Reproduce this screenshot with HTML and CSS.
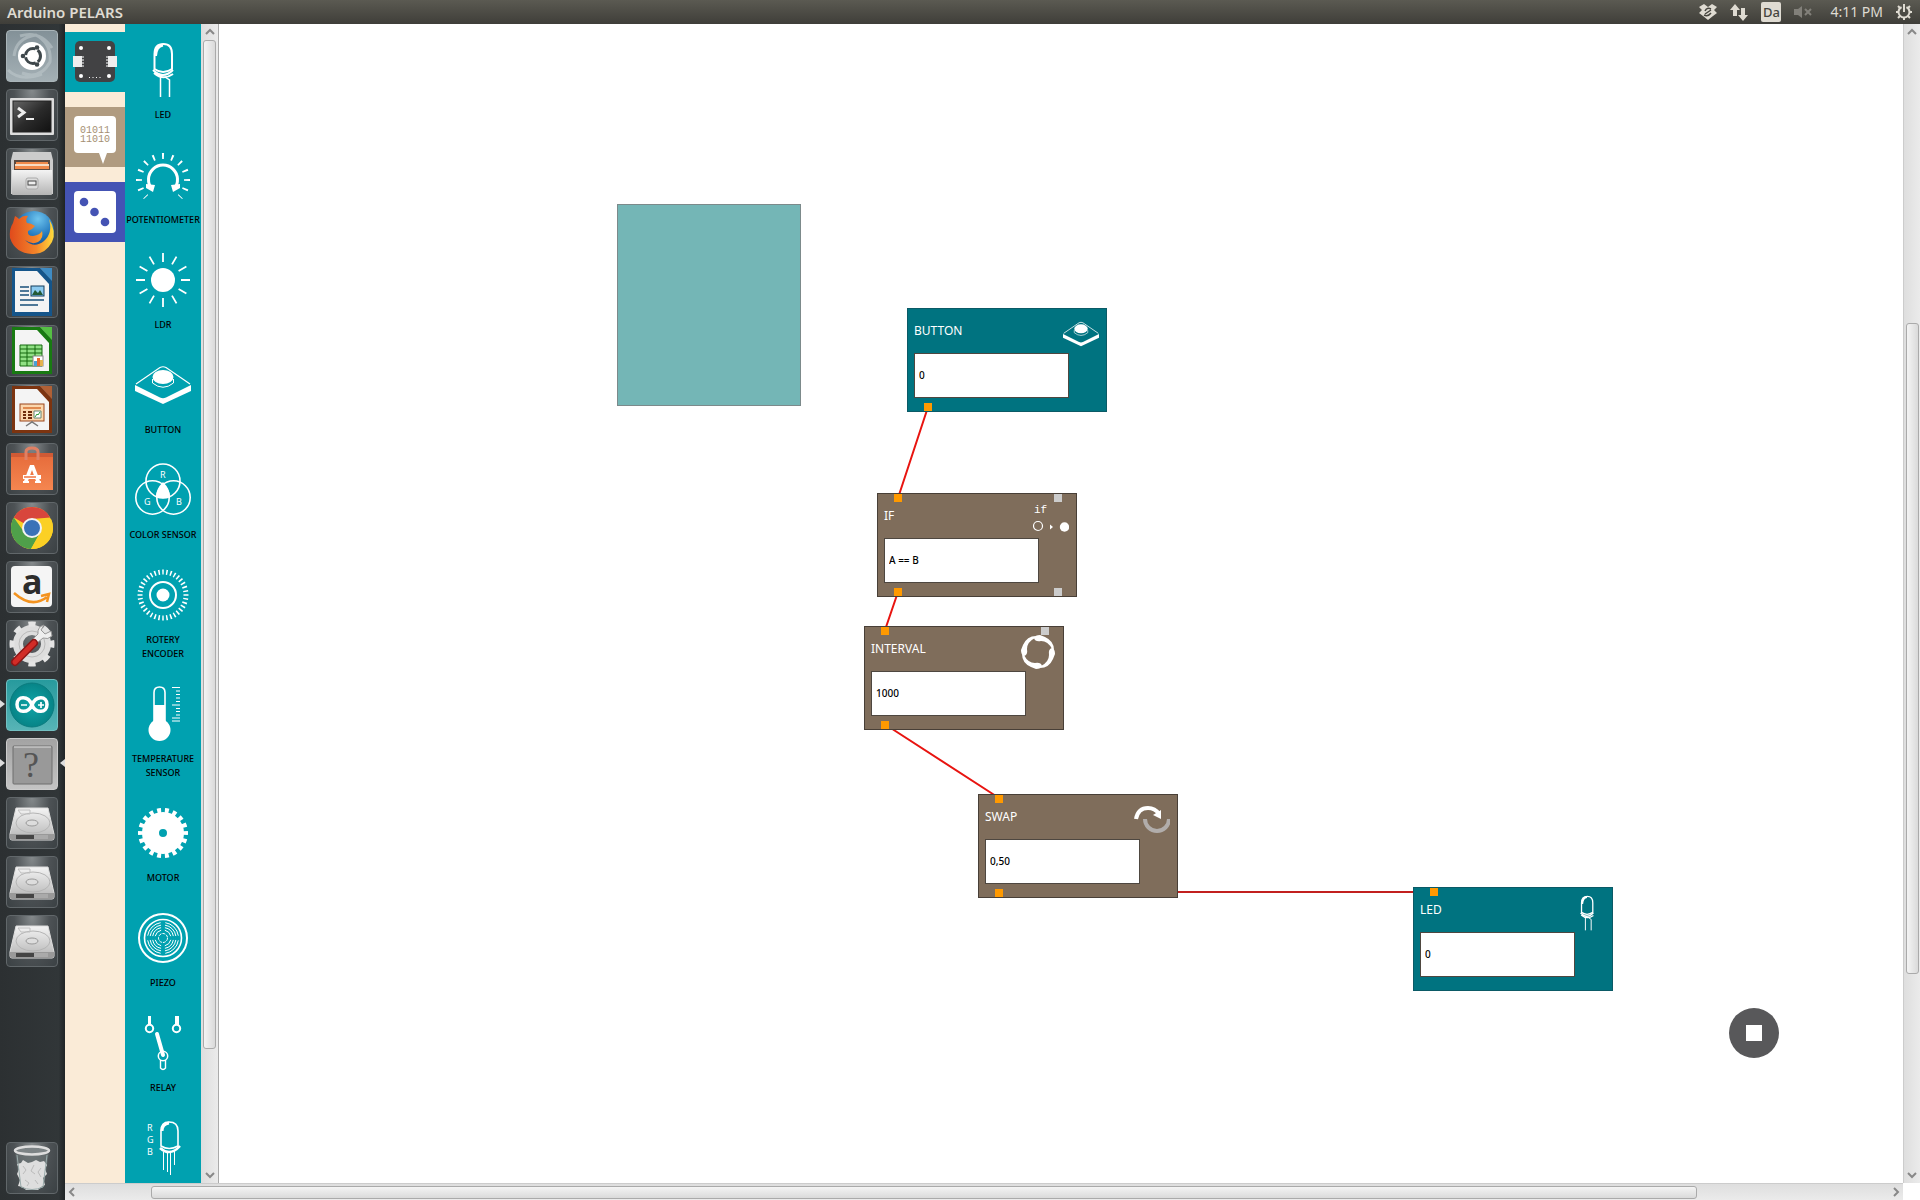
FILE: index.html
```html
<!DOCTYPE html>
<html lang="en">
<head>
<meta charset="utf-8">
<title>Arduino PELARS</title>
<link rel="stylesheet" href="styles.css">
</head>
<body>
<svg class="defs" aria-hidden="true">
  <defs>
    <linearGradient id="silver" x1="0" y1="0" x2="0" y2="1"><stop offset="0" stop-color="#f4f4f4"/><stop offset="1" stop-color="#b4b4b4"/></linearGradient>
    <linearGradient id="screen" x1="0" y1="0" x2="1" y2="1"><stop offset="0" stop-color="#666"/><stop offset=".5" stop-color="#2b2b2b"/><stop offset="1" stop-color="#111"/></linearGradient>
    <linearGradient id="orange" x1="0" y1="0" x2="0" y2="1"><stop offset="0" stop-color="#e56a3a"/><stop offset="1" stop-color="#f58650"/></linearGradient>
    <radialGradient id="globe" cx=".6" cy=".2" r=".8"><stop offset="0" stop-color="#6ec4ee"/><stop offset=".6" stop-color="#1b70b8"/><stop offset="1" stop-color="#123a75"/></radialGradient>
    <linearGradient id="fox" x1="0" y1="0" x2="1" y2="0"><stop offset="0" stop-color="#e04a1c"/><stop offset=".6" stop-color="#f4852a"/><stop offset="1" stop-color="#ffdc3c"/></linearGradient>
    <radialGradient id="tealdisc"><stop offset="0" stop-color="#10a5a8"/><stop offset="1" stop-color="#078487"/></radialGradient>
  </defs>
  <symbol id="i-led" viewBox="0 0 56 56">
    <path d="M19.500 27V12Q19.500 2 28.500 2Q37 2 37 12V27Q28 33 19.500 27Z" fill="none" stroke="#fff" stroke-width="2"/>
    <path d="M20.500 14Q21 4 28 3" fill="none" stroke="#fff" stroke-width="3"/>
    <path d="M18 28Q28 38 38 28M19 31Q28 39 38 32" fill="none" stroke="#fff" stroke-width="2"/>
    <path d="M25.500 34V55M34.500 55V38L30 35" fill="none" stroke="#fff" stroke-width="1.500"/>
  </symbol>
  <symbol id="i-button" viewBox="0 0 56 56">
    <path d="M0 28L25 40.500Q28 42 31 40.500L56 28V34L28 47L0 34Z" fill="#fff"/>
    <path d="M1 27L25 10.500Q28 9 31 10.500L55 27" fill="none" stroke="#fff" stroke-width="1.200"/>
    <ellipse cx="28" cy="20" rx="10.500" ry="7" fill="#fff"/>
    <path d="M17.500 22V26Q28 34.500 38.500 26V22" fill="none" stroke="#fff"/>
  </symbol>
  <symbol id="i-drive" viewBox="0 0 52 52">
    <path d="M10 11H42L48 37V41Q48 43 46 43H6Q4 43 4 41V37Z" fill="url(#silver)" stroke="#ddd"/>
    <path d="M4 37H48V41Q48 43 46 43H6Q4 43 4 41Z" fill="#999"/><path d="M10 38H42V42H10Z" fill="#444"/><path d="M28 38H42V42H28Z" fill="#aaa"/>
    <ellipse cx="27" cy="26" rx="17" ry="10" fill="none" stroke="#b5b5b5"/><ellipse cx="26" cy="26" rx="6" ry="3" fill="#ddd" stroke="#999"/>
    <path d="M12 13H24V17H15Z" fill="none" stroke="#c0c0c0"/>
  </symbol>
</svg>

<header class="topbar">
  <h1 class="topbar-title">Arduino PELARS</h1>
  <div class="indicators">
    <svg width="18" height="18" viewBox="0 0 18 18"><path d="M5 1L9 4L13 1L18 4L15 7L18 10L14 13L9 17L4 13L0 10L3 7L0 4Z" fill="#dfdbd2"/><path d="M12 6Q8 4 6 8M5 12Q9 14 12 10M12 7L6 11" fill="none" stroke="#45443e" stroke-width="1.500"/></svg>
    <svg width="18" height="18" viewBox="0 0 18 18"><path d="M5 1L10 7H7V13H3V7H0ZM13 18L8 12H11V5H15V12H18Z" fill="#dfdbd2"/></svg>
    <span class="keyboard">Da</span>
    <svg width="18" height="18" viewBox="0 0 18 18"><path d="M0 6H4L8 3V15L4 12H0Z" fill="#82807a"/><path d="M11 6L17 12M17 6L11 12" stroke="#82807a" stroke-width="2"/></svg>
    <time class="clock">4:11 PM</time>
    <svg width="16" height="18" viewBox="0 0 16 18"><circle cx="8" cy="9" r="5.500" fill="none" stroke="#dfdbd2" stroke-width="2" pathLength="20" stroke-dasharray="17 3" stroke-dashoffset="3.500"/><path d="M8 1V9M0 9H3M13 9H16M2 15L4 13M14 15L12 13M2 3L4 5M14 3L12 5M8 14V17" stroke="#dfdbd2" stroke-width="2"/></svg>
  </div>
</header>

<div class="desktop">
  <nav class="launcher" aria-label="Launcher">
    <button class="app app-dash" aria-label="Search"><svg viewBox="0 0 52 52"><path d="M8 26Q10 8 30 5Q46 14 44 32Q34 50 16 43M2 40Q14 52 36 44M14 6Q34 0 46 18" fill="none" stroke="#bcc6ca" stroke-width="3" opacity=".6"/><circle cx="26" cy="26" r="14" fill="#fff"/><circle cx="27" cy="26" r="7.500" fill="none" stroke="#3e474b" stroke-width="3" pathLength="3" stroke-dasharray=".85 .15" stroke-dashoffset="-.57"/><g fill="#3e474b"><circle cx="17" cy="26" r="2.300"/><circle cx="31" cy="17.500" r="2.300"/><circle cx="31" cy="34.500" r="2.300"/></g></svg></button>
    <button class="app" aria-label="Terminal"><svg viewBox="0 0 52 52"><rect x="4" y="9" width="44" height="37" rx="1" fill="#ddd"/><rect x="7" y="12" width="38" height="31" fill="url(#screen)" stroke="#222"/><path d="M12 19L18 23.500L12 28" fill="none" stroke="#eee" stroke-width="3"/><path d="M20 30H28" stroke="#eee" stroke-width="2"/></svg></button>
    <button class="app" aria-label="Files"><svg viewBox="0 0 52 52"><path d="M7 4H45L47 12V46H5V12Z" fill="#ccc"/><path d="M8 12H44V22H8Z" fill="#5a4a40"/><path d="M10 14H42V16H10ZM9 18H43V21H9Z" fill="#f08a4b"/><path d="M9 16H43V18H9Z" fill="#f6dcc4"/><path d="M6 22H46V46Q46 47 45 47H7Q6 47 6 46Z" fill="url(#silver)"/><rect x="20" y="30" width="12" height="11" rx="2" fill="#ddd" stroke="#aaa"/><rect x="22" y="33" width="8" height="4" fill="#eee" stroke="#444"/></svg></button>
    <button class="app" aria-label="Firefox"><svg viewBox="0 0 52 52"><circle cx="28" cy="24" r="20" fill="url(#globe)"/><path d="M9 9Q11 10 13 12Q17 8 22 9Q19 13 21 16Q25 16 29 19Q27 22 22 24Q21 29 27 29Q34 28 36 24Q38 31 32 35Q26 38 19 33Q28 42 38 34Q47 26 43 12Q51 25 46 35Q39 48 26 47Q9 46 4 31Q3 22 7 16Z" fill="url(#fox)"/></svg></button>
    <button class="app" aria-label="Writer"><svg viewBox="0 0 52 52"><path d="M6 2H34L46 15V50H6Z" fill="#15558a"/><path d="M34 2H46V15Z" fill="#3f8cc4"/><path d="M9 5H31L43 18V46H9Z" fill="#f4f4f4"/><path d="M14 21H23M14 25H23M14 29H23M14 34H38M14 39H32" stroke="#174f79" stroke-width="1.600"/><rect x="25" y="20" width="13" height="10" fill="#8ccaf0" stroke="#123c5c"/><path d="M26 29L29 24L32 27L34 24L37 29Z" fill="#245a35"/></svg></button>
    <button class="app" aria-label="Calc"><svg viewBox="0 0 52 52"><path d="M6 2H34L46 15V49H6Z" fill="#187a12"/><path d="M34 2H46V15Z" fill="#55c044"/><path d="M9 5H31L43 18V46H9Z" fill="#f4f4f4"/><path d="M14 20H36V41H14Z" fill="#90e084"/><path d="M14 20H36V41H14ZM14 24H36M14 28H36M14 32H36M14 36H36M21 20V41M29 20V41" fill="none" stroke="#14680f"/><rect x="27" y="31" width="10" height="10" fill="#fff" stroke="#888"/><path d="M28 36H31V41H28Z" fill="#48a0d8"/><path d="M31 33H34V41H31Z" fill="#e86a30"/><path d="M34 35H37V41H34Z" fill="#e4b350"/></svg></button>
    <button class="app" aria-label="Impress"><svg viewBox="0 0 52 52"><path d="M6 2H34L46 15V49H6Z" fill="#7c3410"/><path d="M34 2H46V15Z" fill="#b06035"/><path d="M9 5H31L43 18V46H9Z" fill="#f4f4f4"/><rect x="14" y="20" width="24" height="17" fill="#fbd7ae" stroke="#9a451b"/><path d="M17 24H35" stroke="#e08a50" stroke-width="2"/><path d="M17 28H20M22 28H26M17 31H20M22 31H26M17 34H20M22 34H26" stroke="#6e2c0c" stroke-width="2"/><path d="M28 27H35V34H28Z" fill="#fff" stroke="#687"/><path d="M29 33L31 30L32 31L34 28" stroke="#2d9e38" fill="none"/><path d="M26 37V39M20 42L26 38L32 42" stroke="#777" stroke-width="1.500" fill="none"/></svg></button>
    <button class="app" aria-label="Software Center"><svg viewBox="0 0 52 52"><path d="M5 10H47V47H5Z" fill="url(#orange)"/><path d="M5 10H47V14H5Z" fill="#cf5a35"/><path d="M20 17V9Q20 5 26 5Q32 5 32 9V17" fill="none" stroke="#df8064" stroke-width="3"/><path d="M24 22H28L34 38H35V40H29V38H30L26 27L22 38H23V40H17V38H18Z" fill="#fff"/><path d="M17 34H35" stroke="#fff" stroke-width="4"/><path d="M18 34H30" stroke="#f07440" stroke-width="1.500"/></svg></button>
    <button class="app" aria-label="Chrome"><svg viewBox="0 0 52 52"><circle cx="26" cy="26" r="21" fill="#fbd024"/><path d="M26 26L7.800 15.500A21 21 0 0 1 44.200 15.500L26 17Z" fill="#d8463c"/><path d="M7.800 15.500A21 21 0 0 0 25 47L34 31L26 35L18 30Z" fill="#4fa04a"/><path d="M25 47L35 29V17H45A21 21 0 0 1 25 47Z" fill="#fbd024"/><circle cx="26" cy="26" r="9" fill="#3a72b8" stroke="#f2f2f2" stroke-width="2"/></svg></button>
    <button class="app" aria-label="Amazon"><svg viewBox="0 0 52 52"><rect x="5" y="5" width="41" height="41" rx="4" fill="#f5f5f5"/><text class="amazon-a" x="16" y="33">a</text><path d="M8 32Q26 48 41 36M35 35L43 33L41 41" fill="none" stroke="#f39320" stroke-width="2.500"/></svg></button>
    <button class="app" aria-label="System Settings"><svg viewBox="0 0 52 52"><circle cx="26" cy="24" r="14" fill="none" stroke="#ddd" stroke-width="10"/><circle cx="26" cy="24" r="20" fill="none" stroke="#e4e4e4" stroke-width="5" pathLength="8" stroke-dasharray=".46 .54" stroke-dashoffset=".23"/><circle cx="26" cy="24" r="13" fill="none" stroke="#bbb"/><path d="M38 5L35 10L39 14L45 11L46 16Q42 20 37 18L31 23L27 19L32 14Q31 7 38 5Z" fill="#eee" stroke="#999"/><path d="M9 42L28 23" stroke="#8d1616" stroke-width="8" stroke-linecap="round"/><path d="M9 42L28 23" stroke="#d22c27" stroke-width="5" stroke-linecap="round"/></svg></button>
    <button class="app app-arduino running" aria-label="Arduino"><svg viewBox="0 0 52 52"><circle cx="26" cy="26" r="22" fill="url(#tealdisc)" stroke="#0a7b7e"/><path d="M26 26C22 16 11 17 11 25.500C11 34 22 35 26 26C30 16 41 17 41 25.500C41 34 30 35 26 26Z" fill="none" stroke="#fff" stroke-width="3.500"/><path d="M15 26H21M32 26H38M35 23V29" stroke="#fff" stroke-width="1.700"/></svg></button>
    <button class="app app-unknown running focused" aria-label="Unknown application"><svg viewBox="0 0 52 52"><rect x="7" y="8" width="39" height="38" rx="1" fill="#999" stroke="#6e6e6e"/><path d="M8 9H45" stroke="#ddd"/><text class="question" x="17" y="39">?</text></svg></button>
    <button class="app" aria-label="Drive 1"><svg><use href="#i-drive"/></svg></button>
    <button class="app" aria-label="Drive 2"><svg><use href="#i-drive"/></svg></button>
    <button class="app" aria-label="Drive 3"><svg><use href="#i-drive"/></svg></button>
    <button class="app app-trash" aria-label="Trash"><svg viewBox="0 0 52 52"><path d="M9 9L14 45Q26 50 38 45L43 9Z" fill="#697274" opacity=".7"/><path d="M11 22L15 21L17 18L22 21L26 20L30 18L34 20L38 19L41 23L39 27L41 32L37 36L39 43L35 45L32 48H20L17 45L12 44L14 38L11 32L13 27Z" fill="#dedede"/><path d="M17 24L20 28L17 32M28 23L25 29L29 32M35 26L32 30L35 35M19 38L23 41L21 44M29 38L32 42" fill="none" stroke="#bbb"/><path d="M11 13L15 45Q26 50 37 45L41 13" fill="none" stroke="#9aa"/><ellipse cx="26" cy="8.500" rx="17" ry="4" fill="#7c8385" stroke="#ddd" stroke-width="2.500"/></svg></button>
  </nav>

  <main class="window">
    <div class="workspace">
      <nav class="tabs" aria-label="Component groups">
        <button class="tab" aria-label="Hardware"><svg class="tab-hardware" viewBox="0 0 60 60"><rect x="10" y="9" width="40" height="41" rx="5" fill="#424244"/><path d="M8 24H17V35H8ZM43 24H52V35H43Z" fill="#eee"/><path d="M17 25H19M17 28H19M17 31H19M17 34H19M41 25H43M41 28H43M41 31H43M41 34H43" stroke="#fff"/><g fill="#fff"><circle cx="16" cy="16" r="2"/><circle cx="44" cy="16" r="2"/><circle cx="16" cy="44" r="2"/><circle cx="44" cy="44" r="2"/></g><path d="M24 45.500H36" stroke="#fff" stroke-dasharray="1 2.500"/></svg></button>
        <button class="tab" aria-label="Logic"><svg class="tab-logic" viewBox="0 0 60 60"><path d="M13 9H47Q51 9 51 13V42Q51 46 47 46H42L38 57L34 46H13Q9 46 9 42V13Q9 9 13 9Z" fill="#fff"/><text class="bits" x="15" y="26">01011</text><text class="bits" x="15" y="35">11010</text></svg></button>
        <button class="tab" aria-label="Behaviour"><svg class="tab-behaviour" viewBox="0 0 60 60"><rect x="9" y="9" width="42" height="42" rx="4" fill="#fff"/><g fill="#4453b4"><circle cx="19" cy="20" r="4.300"/><circle cx="29.500" cy="30" r="4.300"/><circle cx="40" cy="40" r="4.300"/></g></svg></button>
      </nav>
      <div class="palette">
        <button class="part"><svg><use href="#i-led"/></svg><span>LED</span></button>
        <button class="part"><svg viewBox="0 0 56 56"><path d="M11 50A24 24 0 1 1 45 50" fill="none" stroke="#fff" stroke-width="6" pathLength="12" stroke-dasharray=".2 .8" stroke-dashoffset=".1"/><path d="M17 42A14.500 14.500 0 1 1 39 42" fill="none" stroke="#fff" stroke-width="3"/><path d="M11 37L20 38L18 45L11 41Z M45 37L36 38L38 45L45 41Z" fill="#fff"/></svg><span>POTENTIOMETER</span></button>
        <button class="part"><svg viewBox="0 0 56 56"><circle cx="28" cy="28" r="12" fill="#fff"/><g stroke="#fff" stroke-width="1.800"><path id="ray" d="M28 1V10M28 46V55"/><use href="#ray" transform="rotate(30 28 28)"/><use href="#ray" transform="rotate(60 28 28)"/><use href="#ray" transform="rotate(90 28 28)"/><use href="#ray" transform="rotate(120 28 28)"/><use href="#ray" transform="rotate(150 28 28)"/></g></svg><span>LDR</span></button>
        <button class="part"><svg><use href="#i-button"/></svg><span>BUTTON</span></button>
        <button class="part"><svg viewBox="0 0 56 56"><g fill="none" stroke="#fff" stroke-width="1.600"><circle cx="28" cy="19" r="17"/><circle cx="17.500" cy="35.500" r="16.700"/><circle cx="38.500" cy="35.500" r="16.700"/></g><path d="M28 20Q35 27 35 34.500Q28 38 21 34.500Q21 27 28 20Z" fill="#fff"/><g class="rgb-letter"><text x="25" y="16">R</text><text x="9" y="43">G</text><text x="41" y="43">B</text></g></svg><span>COLOR SENSOR</span></button>
        <button class="part"><svg viewBox="0 0 56 56"><circle cx="28" cy="28" r="23" fill="none" stroke="#fff" stroke-width="5" pathLength="36" stroke-dasharray=".38 .62" stroke-dashoffset=".19"/><circle cx="28" cy="28" r="13" fill="none" stroke="#fff" stroke-width="2"/><circle cx="28" cy="28" r="6.500" fill="#fff"/></svg><span>ROTERY<br>ENCODER</span></button>
        <button class="part"><svg viewBox="0 0 56 56"><path d="M19 36V6.500Q19 1 24.500 1Q30 1 30 6.500V36" fill="none" stroke="#fff" stroke-width="1.600"/><path d="M19 19H30V38H19Z" fill="#fff"/><circle cx="24.500" cy="44" r="11" fill="#fff"/><path d="M37 1.500H45M41 5H45M41 8.500H45M41 12H45M41 15.500H45M37 19H45M41 22.500H45M41 25.500H45M41 29H45M37 32H45M37 35H45" stroke="#fff" stroke-width="1.200"/></svg><span>TEMPERATURE<br>SENSOR</span></button>
        <button class="part"><svg viewBox="0 0 56 56"><circle cx="28" cy="28" r="12.500" fill="none" stroke="#fff" stroke-width="17"/><circle cx="28" cy="28" r="22.500" fill="none" stroke="#fff" stroke-width="5" pathLength="18" stroke-dasharray=".5 .5" stroke-dashoffset=".25"/></svg><span>MOTOR</span></button>
        <button class="part"><svg viewBox="0 0 56 56"><g fill="none" stroke="#fff"><circle cx="28" cy="28" r="24" stroke-width="2"/><circle cx="28" cy="28" r="18.500" stroke-width="1.600"/><circle cx="28" cy="28" r="15.500" pathLength="4" stroke-dasharray=".8 .2" stroke-dashoffset="-.1"/><circle cx="28" cy="28" r="13" pathLength="4" stroke-dasharray=".8 .2" stroke-dashoffset="-.1"/><circle cx="28" cy="28" r="10.500" pathLength="4" stroke-dasharray=".76 .24" stroke-dashoffset="-.12"/><circle cx="28" cy="28" r="8" pathLength="4" stroke-dasharray=".7 .3" stroke-dashoffset="-.15"/><circle cx="28" cy="28" r="4.500" stroke-dasharray="3 1"/></g></svg><span>PIEZO</span></button>
        <button class="part"><svg viewBox="0 0 56 56"><g fill="none" stroke="#fff"><circle cx="14.500" cy="13.500" r="3.700" stroke-width="2"/><circle cx="41.500" cy="13.500" r="3.700" stroke-width="2"/><path d="M14.500 1V10" stroke-width="3"/><path d="M42 1V10" stroke-width="4"/><path d="M22 19L28 40" stroke-width="4" stroke-linecap="round"/><circle cx="28" cy="41" r="4.700" stroke-width="1.500"/><path d="M25.500 45V53Q28 56 30.500 53V45" stroke-width="1.400"/></g></svg><span>RELAY</span></button>
        <button class="part" aria-label="RGB LED"><svg viewBox="0 0 56 56"><g class="rgb-letter"><text x="12" y="11">R</text><text x="12" y="23">G</text><text x="12" y="35">B</text></g><path d="M26 26V11Q26 2 34 2Q43 2 43 11V26Q34 31 26 26Z" fill="none" stroke="#fff" stroke-width="1.600"/><path d="M27 11Q27 4 34 3" fill="none" stroke="#fff" stroke-width="3"/><path d="M25 28Q35 37 45 26" fill="none" stroke="#fff" stroke-width="2.500"/><path d="M28.500 32V50M32.500 33V52M35.500 33V55M39.500 31V45" stroke="#fff"/></svg></button>
      </div>
      <div class="scroll scroll-y scroll-palette">
        <svg class="arrow" viewBox="0 0 16 16"><path d="M4 10L8 6L12 10"/></svg>
        <div class="track"><div class="thumb"></div></div>
        <svg class="arrow" viewBox="0 0 16 16"><path d="M4 6L8 10L12 6"/></svg>
      </div>

      <section class="canvas" aria-label="Program">
        <svg class="wires" aria-hidden="true"><path d="M709 383L679 474M679 568L666 606M664 699L780 774"/><path class="wire-dark" d="M780 868H1215"/></svg>
        <div class="drop-area"></div>
        <article class="node node-hardware node-button">
          <label class="node-title" for="button-value">BUTTON</label><input class="node-value" id="button-value" value="0">
          <svg class="node-icon"><use href="#i-button"/></svg><i class="port port-out"></i>
        </article>
        <article class="node node-if">
          <label class="node-title" for="if-value">IF</label><input class="node-value" id="if-value" value="A == B">
          <svg class="node-icon" viewBox="0 0 36 36"><text class="if-text" x="1" y="12">if</text><circle cx="5" cy="25" r="4.500" fill="none" stroke="#fff" stroke-width="1.200"/><path d="M17 23.500L20 26L17 28.500Z" fill="#fff"/><circle cx="31.500" cy="26" r="4.700" fill="#fff"/></svg>
          <i class="port port-in"></i><i class="port port-in port-second"></i><i class="port port-out"></i><i class="port port-out port-second"></i>
        </article>
        <article class="node node-interval">
          <label class="node-title" for="interval-value">INTERVAL</label><input class="node-value" id="interval-value" value="1000">
          <svg class="node-icon" viewBox="0 0 36 36"><g fill="#fff"><path id="swoosh" d="M14 4Q15 1 20 1L25 3Q34 7 34 16L32 15Q28 7 21 7Q15 8 14 4Z"/><use href="#swoosh" transform="rotate(90 18 18)"/><use href="#swoosh" transform="rotate(180 18 18)"/><use href="#swoosh" transform="rotate(270 18 18)"/></g></svg>
          <i class="port port-in"></i><i class="port port-in port-second"></i><i class="port port-out"></i>
        </article>
        <article class="node node-swap">
          <label class="node-title" for="swap-value">SWAP</label><input class="node-value" id="swap-value" value="0,50">
          <svg class="node-icon" viewBox="0 0 36 36"><path d="M11 17A12 12 0 0 0 35 17" fill="none" stroke="#b1adab" stroke-width="4"/><path d="M2 17Q4 6 14 6Q21 6 25 12" fill="none" stroke="#fff" stroke-width="4"/><path d="M19 13L27 8V17Z" fill="#fff"/></svg>
          <i class="port port-in"></i><i class="port port-out"></i>
        </article>
        <article class="node node-hardware node-led">
          <label class="node-title" for="led-value">LED</label><input class="node-value" id="led-value" value="0">
          <svg class="node-icon"><use href="#i-led"/></svg><i class="port port-in"></i>
        </article>
        <button class="stop" aria-label="Stop"></button>
      </section>
      <div class="scroll scroll-y scroll-canvas">
        <svg class="arrow" viewBox="0 0 16 16"><path d="M4 10L8 6L12 10"/></svg>
        <div class="track"><div class="thumb"></div></div>
        <svg class="arrow" viewBox="0 0 16 16"><path d="M4 6L8 10L12 6"/></svg>
      </div>
    </div>
    <div class="scroll scroll-x">
      <svg class="arrow" viewBox="0 0 16 16"><path d="M9 4L5 8L9 12"/></svg>
      <div class="track"><div class="thumb"></div></div>
      <svg class="arrow" viewBox="0 0 16 16"><path d="M7 4L11 8L7 12"/></svg>
    </div>
  </main>
</div>
</body>
</html>
```
FILE: styles.css
```css
* { box-sizing: border-box; }
body {
  margin: 0;
  height: 100vh;
  display: flex;
  flex-direction: column;
  overflow: hidden;
  background: #fff;
  font-family: "Noto Sans", "Open Sans", sans-serif;
}
button { border: 0; padding: 0; margin: 0; background: none; font: inherit; color: inherit; }
svg { display: block; flex: none; }
.defs { position: absolute; width: 0; height: 0; }

/* Top panel */
.topbar {
  flex: none;
  height: 24px;
  padding: 0 8px 0 7px;
  display: flex;
  align-items: center;
  justify-content: space-between;
  background: linear-gradient(#5b5a52, #3f3e39);
  color: #dfdbd2;
}
.topbar-title { margin: 0; font-size: 15px; line-height: 24px; font-weight: 600; }
.indicators { display: flex; align-items: center; gap: 13px; }
.keyboard {
  width: 20px;
  border-radius: 2px;
  background: #dfdbd2;
  color: #45443e;
  font-size: 13px;
  line-height: 20px;
  font-weight: 500;
  text-align: center;
}
.clock { margin-left: 5px; font-size: 14px; line-height: 24px; }

.desktop { flex: 1; min-height: 0; display: flex; }

/* Launcher */
.launcher {
  flex: none;
  width: 65px;
  padding: 6px 7px 6px 6px;
  display: flex;
  flex-direction: column;
  gap: 7px;
  background: linear-gradient(90deg, #2c3032, #313638 90%, #202426);
}
.app {
  position: relative;
  flex: none;
  width: 52px;
  height: 52px;
  border: 1px solid #61676a;
  border-radius: 4px;
  background: radial-gradient(ellipse at 50% 0, #858a8c, #4d5255 50%, #3b4144);
}
.app svg { width: 52px; height: 52px; margin: -1px; }
.app-dash { background: linear-gradient(#839198, #a4b0b5); border-color: #aab5b9; }
.app-arduino { background: linear-gradient(#279a9d, #57b4b6); border-color: #73c0c2; }
.app-unknown { background: linear-gradient(#a3a3a3, #c4c4c4); border-color: #ccc; }
.app-trash { margin-top: auto; }
.running::before, .focused::after {
  content: "";
  position: absolute;
  top: 20px;
  left: -7px;
  border: 4px solid transparent;
  border-right-width: 0;
  border-left: 5px solid #ddd;
}
.focused::after { left: 53px; border-right: 5px solid #ddd; border-left-width: 0; }
.amazon-a { font: 700 34px "Open Sans", sans-serif; fill: #2c2c2c; }
.question { font: 36px "Liberation Serif", serif; fill: #555; }

/* Editor window */
.window { flex: 1; min-width: 0; display: flex; flex-direction: column; }
.workspace { flex: 1; min-height: 0; display: flex; }
.tabs {
  flex: none;
  width: 60px;
  padding-top: 8px;
  display: flex;
  flex-direction: column;
  gap: 15px;
  background: #faebd7;
}
.tab svg { width: 60px; height: 60px; }
.tab-hardware { background: #00a1b0; }
.tab-logic { background: #b09b80; }
.tab-behaviour { background: #4453b4; }
.bits { font: 10px "Liberation Mono", monospace; fill: #a58f72; }

.palette {
  flex: none;
  width: 76px;
  padding-top: 18px;
  display: flex;
  flex-direction: column;
  overflow: hidden;
  background: #00a1b0;
}
.part {
  flex: none;
  padding-bottom: 25px;
  display: flex;
  flex-direction: column;
  align-items: center;
  gap: 10px;
  color: #000;
  font-size: 9px;
  line-height: 14px;
  font-weight: 500;
  white-space: nowrap;
}
.part svg { width: 56px; height: 56px; }
.rgb-letter { fill: #fff; font-size: 9px; font-weight: 400; }

/* Scroll bars */
.scroll { flex: none; display: flex; }
.track { flex: 1; min-width: 0; min-height: 0; display: grid; }
.arrow { width: 16px; height: 16px; fill: none; stroke: #888; stroke-width: 2; }
.thumb { border: 1px solid #aaa; border-radius: 3px; }
.scroll-y {
  width: 17px;
  flex-direction: column;
  align-items: center;
  border-left: 1px solid #ccc;
  background: linear-gradient(90deg, #dedede, #ebebeb);
}
.scroll-y .thumb { width: 13px; background: linear-gradient(90deg, #f4f4f4, #dadada); }
.scroll-palette { width: 18px; border-right: 1px solid #aaa; border-left: 0; }
.scroll-palette .track { grid-template-rows: 1010fr 118fr; }
.scroll-canvas .track { grid-template-rows: 283fr 652fr 193fr; }
.scroll-canvas .thumb { grid-row: 2; }
.scroll-x {
  height: 17px;
  margin-right: 17px;
  align-items: center;
  border-top: 1px solid #ccc;
  background: linear-gradient(#dedede, #ebebeb);
}
.scroll-x .track { grid-template-columns: 70fr 1546fr 190fr; }
.scroll-x .thumb { grid-column: 2; height: 13px; background: linear-gradient(#f4f4f4, #dadada); }

/* Diagram canvas: nodes sit at free positions */
.canvas { position: relative; flex: 1; min-width: 0; overflow: hidden; background: #fff; }
.wires { position: absolute; inset: 0; width: 100%; height: 100%; fill: none; stroke: #e81410; stroke-width: 2; }
.wire-dark { stroke: #c2201f; }
.drop-area {
  position: absolute;
  left: 398px;
  top: 180px;
  width: 184px;
  height: 202px;
  border: 1px solid #7c8a8b;
  background: #74b6b6;
}
.node {
  position: absolute;
  width: 200px;
  height: 104px;
  padding: 12px 6px;
  border: 1px solid #483f37;
  background: #7f6d5b;
  color: #fff;
}
.node-hardware { border-color: #0b5a66; background: #007380; }
.node-button { left: 688px; top: 284px; }
.node-if { left: 658px; top: 469px; }
.node-interval { left: 645px; top: 602px; }
.node-swap { left: 759px; top: 770px; }
.node-led { left: 1194px; top: 863px; }
.node-title { display: block; margin-bottom: 12px; font-size: 12px; line-height: 20px; }
.node-value {
  display: block;
  width: 155px;
  height: 45px;
  padding: 0 4px 2px;
  border: 1px solid #4e4740;
  background: #fff;
  color: #000;
  font: 500 10px "Noto Sans", sans-serif;
}
.node-icon { position: absolute; left: 155px; top: 7px; width: 36px; height: 36px; }
.if-text { font: 11px "Liberation Mono", monospace; fill: #fff; }
.port { position: absolute; left: 16px; width: 8px; height: 8px; background: #f90; }
.port-in { top: 0; }
.port-out { bottom: 0; }
.port-second { left: 176px; background: #ccc; }
.stop {
  position: absolute;
  left: 1510px;
  top: 984px;
  width: 50px;
  height: 50px;
  display: grid;
  place-items: center;
  border-radius: 50%;
  background: #58585a;
}
.stop::before { content: ""; width: 16px; height: 16px; background: #fff; }
```
